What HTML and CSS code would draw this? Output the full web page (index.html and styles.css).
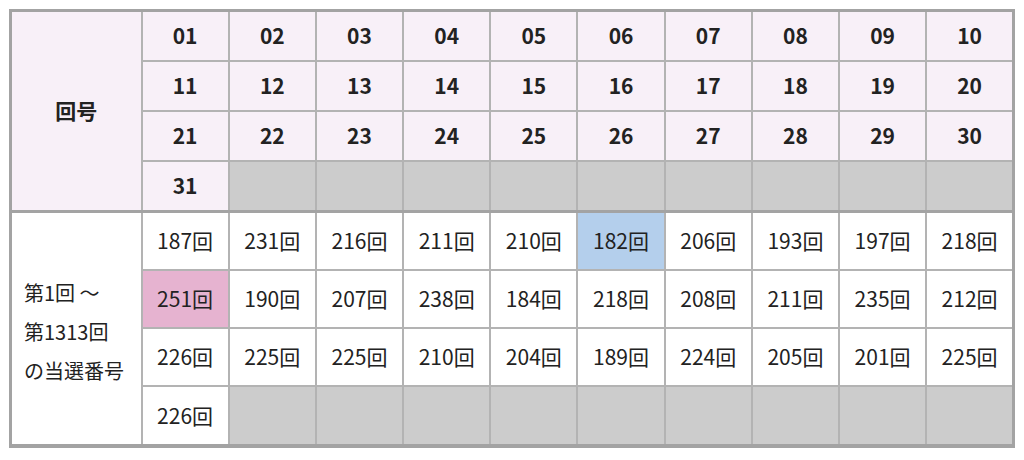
FILE: index.html
```html
<!DOCTYPE html>
<html lang="ja">
<head>
<meta charset="utf-8">
<link rel="stylesheet" href="styles.css">
</head>
<body>
<table class="results">
  <colgroup><col class="c-label"><col span="10"></colgroup>
  <tbody class="head">
    <tr><th rowspan="4" class="label">回号</th><th>01</th><th>02</th><th>03</th><th>04</th><th>05</th><th>06</th><th>07</th><th>08</th><th>09</th><th>10</th></tr>
    <tr><th>11</th><th>12</th><th>13</th><th>14</th><th>15</th><th>16</th><th>17</th><th>18</th><th>19</th><th>20</th></tr>
    <tr><th>21</th><th>22</th><th>23</th><th>24</th><th>25</th><th>26</th><th>27</th><th>28</th><th>29</th><th>30</th></tr>
    <tr><th>31</th><td class="empty"></td><td class="empty"></td><td class="empty"></td><td class="empty"></td><td class="empty"></td><td class="empty"></td><td class="empty"></td><td class="empty"></td><td class="empty"></td></tr>
  </tbody>
  <tbody class="body">
    <tr class="first"><td rowspan="4" class="label">第1回 〜<br>第1313回<br>の当選番号</td><td>187回</td><td>231回</td><td>216回</td><td>211回</td><td>210回</td><td class="low">182回</td><td>206回</td><td>193回</td><td>197回</td><td>218回</td></tr>
    <tr><td class="high">251回</td><td>190回</td><td>207回</td><td>238回</td><td>184回</td><td>218回</td><td>208回</td><td>211回</td><td>235回</td><td>212回</td></tr>
    <tr><td>226回</td><td>225回</td><td>225回</td><td>210回</td><td>204回</td><td>189回</td><td>224回</td><td>205回</td><td>201回</td><td>225回</td></tr>
    <tr><td>226回</td><td class="empty"></td><td class="empty"></td><td class="empty"></td><td class="empty"></td><td class="empty"></td><td class="empty"></td><td class="empty"></td><td class="empty"></td><td class="empty"></td></tr>
  </tbody>
</table>
</body>
</html>
```

FILE: styles.css
```css
html, body {
  margin: 0;
  padding: 0;
  background: #ffffff;
}
body {
  padding: 9px 0 0 9px;
  font-family: "Noto Sans CJK JP", "Noto Sans", sans-serif;
  color: #222222;
}
.results {
  border-collapse: collapse;
  table-layout: fixed;
  width: 1006px;
  border: 3px solid #a3a3a3;
  border-bottom-width: 4px;
}
.c-label {
  width: 131px;
}
.results th,
.results td {
  border: 2px solid #b3b3b3;
  text-align: center;
  padding: 0;
  font-size: 21px;
  line-height: 28px;
}
.head th,
.head td {
  height: 45px;
  background: #f8f0f8;
  font-weight: 700;
  padding-bottom: 3px;
}
.body td {
  height: 54px;
  background: #ffffff;
  font-weight: 400;
  padding-bottom: 2px;
}
.body tr:last-child td {
  height: 55px;
}
.body tr.first td {
  border-top: 3px solid #a3a3a3;
}
.results .empty {
  background: #cccccc;
}
.body td.label {
  text-align: left;
  padding: 6px 0 0 12px;
  line-height: 39px;
  font-size: 20px;
}
.body td.low {
  background: #b4cfec;
}
.body td.high {
  background: #e6b3d0;
}
```
